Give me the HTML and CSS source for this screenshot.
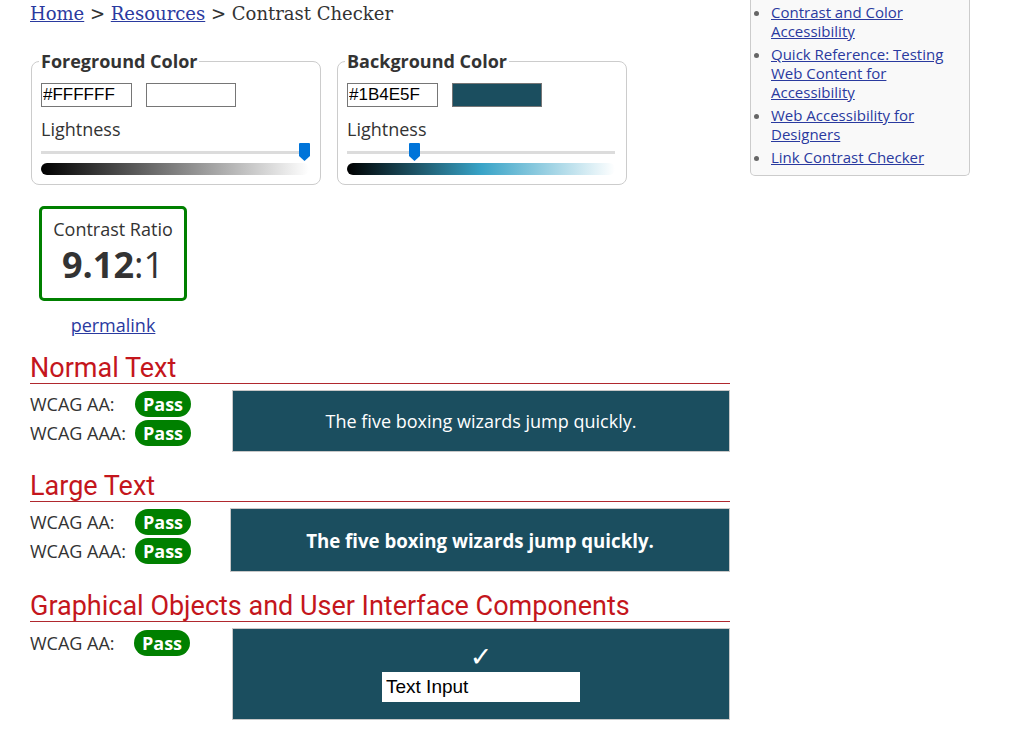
FILE: index.html
```html
<!DOCTYPE html>
<html lang="en">
<head>
<meta charset="utf-8">
<title>Contrast Checker</title>
<link rel="stylesheet" href="styles.css">
</head>
<body>
<div class="page">
  <main class="main">
    <nav class="crumbs"><a href="#">Home</a> &gt; <a href="#">Resources</a> &gt; Contrast Checker</nav>

    <div class="pickers">
      <fieldset class="picker">
        <legend>Foreground Color</legend>
        <div class="inputs">
          <input class="hex" type="text" value="#FFFFFF">
          <span class="swatch swatch-fg"></span>
        </div>
        <div class="label">Lightness</div>
        <div class="slider">
          <div class="track"></div>
          <svg class="thumb" style="left:258px" width="11" height="18" viewBox="0 0 11 18"><path d="M1 0H10A1 1 0 0 1 11 1V13L5.5 18L0 13V1A1 1 0 0 1 1 0Z" fill="#0074d9"/></svg>
        </div>
        <div class="grad grad-fg"></div>
      </fieldset>

      <fieldset class="picker">
        <legend>Background Color</legend>
        <div class="inputs">
          <input class="hex" type="text" value="#1B4E5F">
          <span class="swatch swatch-bg"></span>
        </div>
        <div class="label">Lightness</div>
        <div class="slider">
          <div class="track"></div>
          <svg class="thumb" style="left:62px" width="11" height="18" viewBox="0 0 11 18"><path d="M1 0H10A1 1 0 0 1 11 1V13L5.5 18L0 13V1A1 1 0 0 1 1 0Z" fill="#0074d9"/></svg>
        </div>
        <div class="grad grad-bg"></div>
      </fieldset>
    </div>

    <div class="ratio-wrap">
      <div class="ratio">
        <div class="ratio-label">Contrast Ratio</div>
        <div class="ratio-value"><b>9.12</b>:1</div>
      </div>
      <div class="permalink"><a href="#">permalink</a></div>
    </div>

    <section class="result">
      <h2>Normal Text</h2>
      <div class="result-body">
        <div class="checks">
          <div class="check"><span class="level">WCAG AA:</span><span class="pass">Pass</span></div>
          <div class="check"><span class="level">WCAG AAA:</span><span class="pass">Pass</span></div>
        </div>
        <div class="sample sample-normal">The five boxing wizards jump quickly.</div>
      </div>
    </section>

    <section class="result">
      <h2>Large Text</h2>
      <div class="result-body result-body-large">
        <div class="checks">
          <div class="check"><span class="level">WCAG AA:</span><span class="pass">Pass</span></div>
          <div class="check"><span class="level">WCAG AAA:</span><span class="pass">Pass</span></div>
        </div>
        <div class="sample sample-large">The five boxing wizards jump quickly.</div>
      </div>
    </section>

    <section class="result">
      <h2>Graphical Objects and User Interface Components</h2>
      <div class="result-body">
        <div class="checks checks-ui">
          <div class="check"><span class="level level-ui">WCAG AA:</span><span class="pass">Pass</span></div>
        </div>
        <div class="sample sample-ui">
          <div class="tick">&#10003;</div>
          <input class="demo-input" type="text" value="Text Input">
        </div>
      </div>
    </section>
  </main>

  <aside class="side">
    <ul class="links">
      <li><a href="#">Contrast and Color Accessibility</a></li>
      <li><a href="#">Quick Reference: Testing Web Content for Accessibility</a></li>
      <li><a href="#">Web Accessibility for Designers</a></li>
      <li><a href="#">Link Contrast Checker</a></li>
    </ul>
  </aside>
</div>
</body>
</html>
```

FILE: styles.css
```css
* { box-sizing: border-box; }
html, body { margin: 0; padding: 0; background: #fff; }
body {
  font-family: "Open Sans", "Liberation Sans", sans-serif;
  color: #333;
  font-size: 18px;
}
a { color: #2a3a9f; }

.page {
  display: flex;
  align-items: flex-start;
  padding-left: 30px;
}
.main { width: 700px; flex: none; }

.crumbs {
  font-family: "DejaVu Serif", "Liberation Serif", serif;
  font-size: 18px;
  line-height: 24px;
  margin-top: 2px;
  color: #333;
}

.pickers {
  display: flex;
  gap: 16px;
  margin-top: 24px;
  padding-left: 1px;
}
.picker {
  margin: 0;
  width: 290px;
  border: 1px solid #ccc;
  border-radius: 8px;
  padding: 10px 9px 9px 9px;
  min-width: 0;
}
.picker legend {
  font-weight: 700;
  font-size: 18px;
  line-height: 23px;
  padding: 0 2px;
  margin-left: -2px;
  color: #333;
}
.inputs { display: flex; gap: 14px; }
.hex {
  width: 91px;
  height: 24px;
  border: 1px solid #767676;
  padding: 0 1px;
  font-family: "Liberation Sans", Arial, sans-serif;
  font-size: 17px;
  color: #000;
  margin: 0;
}
.swatch {
  width: 90px;
  height: 24px;
  border: 1px solid #767676;
  display: block;
}
.swatch-fg { background: #fff; }
.swatch-bg { background: #1b4e5f; }
.label {
  margin-top: 10px;
  line-height: 24px;
  font-size: 18px;
}
.slider {
  position: relative;
  height: 20px;
  margin-top: 2px;
}
.track {
  position: absolute;
  left: 0; right: 2px;
  top: 8px;
  height: 3px;
  background: #dcdcdc;
}
.thumb { position: absolute; top: 0; display: block; }
.grad {
  height: 12px;
  border-radius: 6px;
  margin-right: 2px;
}
.grad-fg { background: linear-gradient(to right, #000, #fff); }
.grad-bg { background: linear-gradient(to right, hsl(195,56%,0%), hsl(195,56%,50%), hsl(195,56%,100%)); }

.ratio-wrap { width: 157px; padding-left: 9px; margin-top: 21px; }
.ratio {
  width: 148px;
  height: 95px;
  border: 3px solid #008000;
  border-radius: 5px;
  text-align: center;
  padding-top: 8px;
}
.ratio-label { font-size: 18px; line-height: 24px; }
.ratio-value { font-size: 36px; line-height: 42px; margin-top: 3px; }
.ratio-value b { font-weight: 700; }
.permalink {
  width: 148px;
  text-align: center;
  margin-top: 12px;
  line-height: 24px;
  font-size: 18px;
}

.result { margin-top: 19px; }
.ratio-wrap + .result { margin-top: 16px; }
.result h2 {
  margin: 0;
  font-family: Roboto, "Liberation Sans", sans-serif;
  font-weight: 400;
  font-size: 27px;
  line-height: 30px;
  color: #c4161c;
  border-bottom: 1px solid #b0282e;
}
.result-body { display: flex; }
.checks { width: 202px; padding-top: 7px; flex: none; }
.result-body-large .checks { width: 200px; }
.check { display: flex; align-items: center; height: 26px; margin-bottom: 3px; }
.level { width: 105px; font-size: 18px; }
.level-ui { width: 104px; }
.pass {
  background: #008000;
  color: #fff;
  font-weight: 700;
  font-size: 18px;
  line-height: 26px;
  padding: 0 8px;
  border-radius: 13px;
}
.checks-ui { padding-top: 8px; }
.sample {
  flex: 1;
  margin-top: 6px;
  background: #1b4e5f;
  color: #fff;
  border: 1px solid #c8c8c8;
  display: flex;
  align-items: center;
  justify-content: center;
}
.sample-normal { height: 62px; font-size: 18px; }
.sample-large { height: 64px; font-size: 18.67px; font-weight: 700; }
.sample-ui {
  height: 92px;
  flex-direction: column;
  justify-content: flex-start;
  padding-top: 15px;
}
.tick {
  font-family: "DejaVu Sans", sans-serif;
  font-size: 27px;
  line-height: 26px;
  color: #fff;
}
.demo-input {
  margin-top: 2px;
  width: 198px;
  height: 30px;
  border: 0;
  background: #fff;
  padding: 0 4px;
  font-family: "Liberation Sans", Arial, sans-serif;
  font-size: 19px;
  color: #000;
}

.side {
  margin-left: 20px;
  width: 220px;
  flex: none;
  background: #f9f9f9;
  border: 1px solid #ccc;
  border-top: 0;
  border-radius: 0 0 5px 5px;
  padding: 3px 10px 8px 0;
}
.links {
  margin: 0;
  padding-left: 20px;
  font-size: 15px;
  line-height: 19px;
}
.links li { margin-bottom: 4px; }
.links li:last-child { margin-bottom: 0; }
.links li::marker { color: #666; }
.links a { color: #2a3a9f; }
```
